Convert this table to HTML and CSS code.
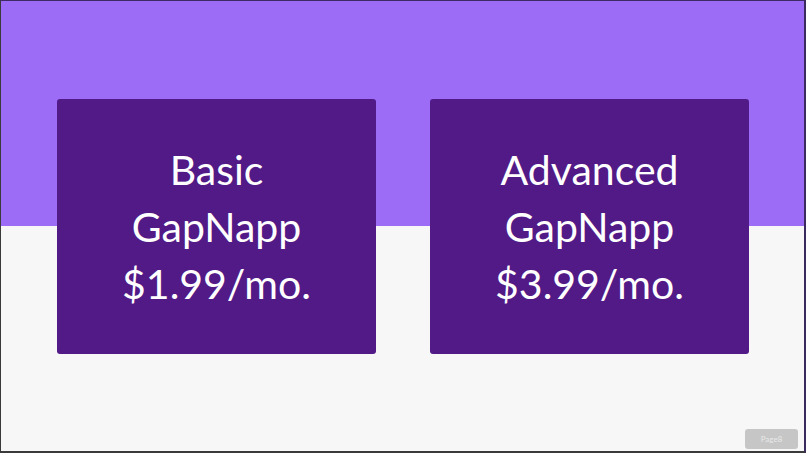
FILE: index.html
```html
<!DOCTYPE html>
<html>
<head>
<meta charset="utf-8">
<link rel="stylesheet" href="styles.css">
</head>
<body>
<div class="frame">
  <div class="cards">
    <div class="card"><p>Basic<br>GapNapp<br>$1.99/mo.</p></div>
    <div class="card"><p>Advanced<br>GapNapp<br>$3.99/mo.</p></div>
  </div>
  <button class="page-btn">Page8</button>
</div>
</body>
</html>
```
FILE: styles.css
```css
html, body {
  margin: 0;
  padding: 0;
}
body {
  width: 806px;
  height: 453px;
  overflow: hidden;
  font-family: Lato, "Open Sans", sans-serif;
}
.frame {
  position: relative;
  box-sizing: border-box;
  width: 806px;
  height: 453px;
  border-top: 1px solid #3d2a66;
  border-left: 1px solid #3a3a3a;
  border-right: 2px solid #3a2a5e;
  border-bottom: 2px solid #3a3a3a;
  background: linear-gradient(to bottom, #9d6cf6 0, #9d6cf6 225px, #f7f7f7 225px, #f7f7f7 100%);
  padding-top: 98px;
}
.cards {
  display: flex;
  justify-content: center;
  gap: 54px;
  padding-left: 1px;
}
.card {
  width: 319px;
  height: 255px;
  background: #511a86;
  border-radius: 3px;
  display: flex;
  align-items: center;
  justify-content: center;
}
.card p {
  margin: 0;
  color: #ffffff;
  font-size: 41px;
  line-height: 57px;
  text-align: center;
  font-weight: 400;
}
.page-btn {
  position: absolute;
  right: 6px;
  bottom: 2px;
  width: 53px;
  height: 20px;
  border: none;
  border-radius: 3px;
  background: #c6c6c6;
  color: #e8e8e8;
  font-family: Lato, sans-serif;
  font-size: 8px;
  padding: 0;
}
```
